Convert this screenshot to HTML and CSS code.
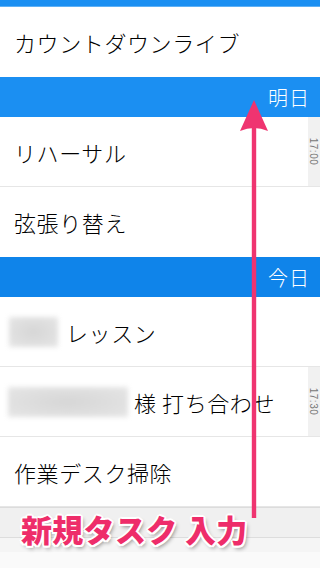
FILE: index.html
```html
<!DOCTYPE html>
<html lang="ja">
<head>
<meta charset="utf-8">
<link rel="stylesheet" href="styles.css">
</head>
<body>
<div class="screen">
  <div class="topbar"></div>
  <div class="row first"><span class="title">カウントダウンライブ</span></div>
  <div class="section">明日</div>
  <div class="row"><span class="title">リハーサル</span><div class="time"><span>17:00</span></div></div>
  <div class="row last"><span class="title">弦張り替え</span></div>
  <div class="section today">今日</div>
  <div class="row"><span class="blur short"></span><span class="title">レッスン</span></div>
  <div class="row"><span class="blur long"></span><span class="title">様 打ち合わせ</span><div class="time"><span>17:30</span></div></div>
  <div class="row"><span class="title">作業デスク掃除</span></div>
  <div class="filler"></div>

  <svg class="arrow" width="32" height="420" viewBox="0 0 32 420">
    <rect x="13.8" y="24" width="4.4" height="394" fill="#ef3470"/>
    <path d="M16 0 L30 31 Q16 25 2 31 Z" fill="#ef3470"/>
  </svg>
  <div class="note">新規タスク 入力</div>
</div>
</body>
</html>
```
FILE: styles.css
```css
* { box-sizing: border-box; }
html, body { margin: 0; padding: 0; background: #fff; }
body {
  font-family: "Noto Sans CJK JP", "Noto Sans", sans-serif;
  color: #111;
}
.screen {
  position: relative;
  width: 320px;
  height: 568px;
  overflow: hidden;
  display: flex;
  flex-direction: column;
}
.topbar {
  height: 7px;
  background: #1b8ff2;
  border-bottom: 1px solid #5fb0f5;
  flex: none;
}
.row {
  height: 70px;
  flex: none;
  display: flex;
  align-items: center;
  padding-left: 14px;
  border-bottom: 1px solid #e6e6e6;
  position: relative;
}
.row.first, .row.last { border-bottom: none; }
.title {
  font-size: 22px;
  font-weight: 300;
  letter-spacing: 0.6px;
  white-space: nowrap;
  color: #000;
}
.section {
  height: 40px;
  flex: none;
  background: #1b8ff2;
  color: #fff;
  font-size: 20px;
  font-weight: 300;
  display: flex;
  align-items: center;
  justify-content: flex-end;
  padding-right: 10px;
  letter-spacing: 1px;
}
.section.today { background: #0f84ea; }
.time {
  position: absolute;
  right: 0;
  top: 0;
  bottom: 0;
  width: 12px;
  background: #f1f1f1;
  display: flex;
  align-items: center;
  justify-content: center;
}
.time span {
  transform: rotate(90deg);
  font-family: "Liberation Sans", sans-serif;
  font-size: 10px;
  letter-spacing: 0.5px;
  color: #777;
  white-space: nowrap;
}
.blur {
  display: inline-block;
  height: 30px;
  background: radial-gradient(ellipse at center, #d6d6d6, #e6e6e6);
  filter: blur(2.5px);
  margin-right: 8px;
  flex: none;
}
.blur.short { width: 49px; margin-left: -5px; }
.blur.long { width: 120px; margin-left: -6px; margin-right: 6px; }
.filler {
  flex: 1;
  background:
    linear-gradient(#dcdcdc, #dcdcdc) 0 0 / 100% 1px no-repeat,
    linear-gradient(#f0f0f0, #f0f0f0) 0 1px / 100% 29px no-repeat,
    linear-gradient(#dddddd, #dddddd) 0 30px / 100% 1px no-repeat,
    linear-gradient(#f5f5f5, #f5f5f5) 0 31px / 100% 14px no-repeat,
    #fafafa;
}
.arrow {
  position: absolute;
  left: 238px;
  top: 100px;
}
.note {
  position: absolute;
  left: 21px;
  top: 506px;
  font-size: 31px;
  font-weight: 900;
  color: #ee2d6a;
  letter-spacing: 0.3px;
  white-space: nowrap;
  text-shadow:
    2px 0 0 #fff, -2px 0 0 #fff, 0 2px 0 #fff, 0 -2px 0 #fff,
    1.5px 1.5px 0 #fff, -1.5px 1.5px 0 #fff, 1.5px -1.5px 0 #fff, -1.5px -1.5px 0 #fff,
    2px 3px 4px rgba(0,0,0,0.45);
}
```
